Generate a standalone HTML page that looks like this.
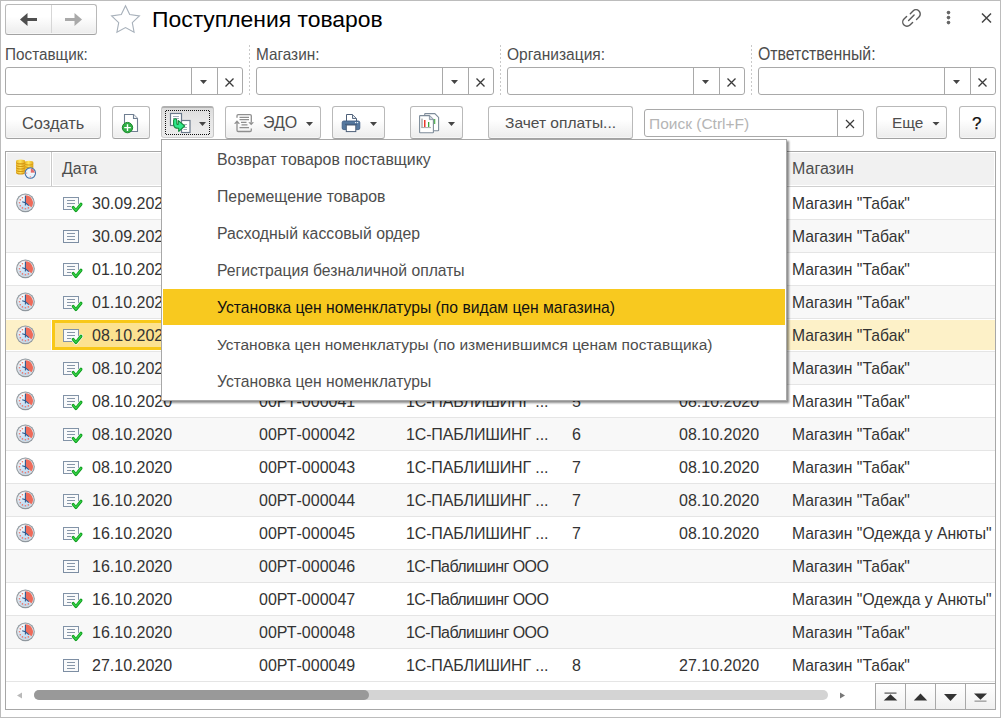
<!DOCTYPE html>
<html><head><meta charset="utf-8">
<style>
*{box-sizing:border-box;margin:0;padding:0}
html,body{width:1001px;height:718px;overflow:hidden;background:#fff;font-family:"Liberation Sans",sans-serif;color:#333}
.a{position:absolute}
#win{position:absolute;left:0;top:0;width:1001px;height:718px;border:1px solid #bcbcbc}
.btn{position:absolute;border:1px solid #b9b9b9;border-bottom:1px solid #a2a2a2;border-radius:3px;background:linear-gradient(#fff 0%,#fff 40%,#ececec 100%);box-shadow:inset 0 -1px 0 #f6f6f6}
.lbl{position:absolute;font-size:15.6px;color:#4d4d4d;white-space:nowrap;line-height:18px;transform:scaleY(1.1);transform-origin:0 14.3px}
.inp{position:absolute;top:67px;width:238px;height:28px;border:1px solid #a9a9a9;border-radius:3px;background:#fff}
.inp .d1,.inp .d2{position:absolute;top:0;bottom:0;width:1px;background:#a9a9a9}
.inp .d1{left:185px}.inp .d2{left:211px}
.tri{position:absolute;width:0;height:0;border-left:4px solid transparent;border-right:4px solid transparent;border-top:4px solid #444}
.sep{position:absolute;top:45px;height:50px;width:1px;background:repeating-linear-gradient(#c9c9c9 0 2px,transparent 2px 4px)}
.row{position:absolute;left:6px;width:989px;height:33px;border-bottom:1px solid #e5e5e5}
.row span{position:absolute;top:0;line-height:33px;font-size:16px;color:#333;white-space:nowrap}
.mi{position:absolute;left:163px;width:622px;height:36px;font-size:15.7px;color:#4d4d4d;white-space:nowrap}
.mi span{position:absolute;left:54px;top:10px;line-height:18px}

.clk{position:absolute;left:10px;top:6px;width:20px;height:20px}
.doc{position:absolute;left:56px;top:9px;width:22px;height:17px}
.selcell{position:absolute;left:46px;top:1px;width:220px;height:30px;background:#fce290;border:3px solid #f8c818;border-right:none}
</style></head><body>
<div id="win"></div>
<svg width="0" height="0" style="position:absolute">
<defs>
<linearGradient id="gface" x1="0" y1="0" x2="0" y2="1"><stop offset="0" stop-color="#ffffff"/><stop offset="1" stop-color="#b7d5ee"/></linearGradient>
<linearGradient id="gring" x1="0" y1="0" x2="1" y2="1"><stop offset="0" stop-color="#e6e8ea"/><stop offset="1" stop-color="#8e969e"/></linearGradient>
<symbol id="clock" viewBox="0.6 0.2 20 20">
<circle cx="10" cy="10" r="9.4" fill="#8f979e"/>
<circle cx="10" cy="10" r="8.3" fill="#dfe3e6"/>
<circle cx="10" cy="10" r="7.5" fill="url(#gface)"/>
<path d="M10 10L10 2.5A7.5 7.5 0 0 1 16.07 14.41Z" fill="#ee6b5a"/>
<g fill="#f07566"><circle cx="12.95" cy="15.11" r=".8"/><circle cx="10.00" cy="15.90" r=".8"/><circle cx="7.05" cy="15.11" r=".8"/><circle cx="4.89" cy="12.95" r=".8"/><circle cx="4.10" cy="10.00" r=".8"/><circle cx="4.89" cy="7.05" r=".8"/><circle cx="7.05" cy="4.89" r=".8"/></g>
<path d="M10 3V12.8M6.8 9L10 10L13.4 12.8" stroke="#2d5b90" stroke-width="1.1" fill="none"/>
</symbol>
<symbol id="doc" viewBox="0 0 22 17">
<rect x="1.5" y="1.5" width="15" height="12" fill="#f9fafb" stroke="#7d8ea3" stroke-width="1"/>
<path d="M5 4.5H13M5 7.5H13M5 10.5H13" stroke="#8796a8" stroke-width="1"/>
</symbol>
<symbol id="docok" viewBox="0 0 22 17">
<rect x="1.5" y="1.5" width="15" height="12" fill="#f9fafb" stroke="#8293a7" stroke-width="1"/>
<path d="M5 4.5H13M5 7.5H13M5 10.5H13" stroke="#8796a8" stroke-width="1"/>
<path d="M11.2 11.4L13.9 14.6L19 8.2" stroke="#fff" stroke-width="4.2" fill="none" stroke-linecap="round" stroke-linejoin="round"/>
<path d="M11.2 11.4L13.9 14.6L19 8.2" stroke="#0e9a1d" stroke-width="3" fill="none" stroke-linecap="round" stroke-linejoin="round"/>
<path d="M11.4 11.5L13.9 14.4L18.9 8.3" stroke="#33cf45" stroke-width="1.4" fill="none" stroke-linecap="round" stroke-linejoin="round"/>
</symbol>
</defs></svg>


<!-- nav buttons -->
<div class="btn" style="left:5px;top:4px;width:92px;height:31px"></div>
<div class="a" style="left:51px;top:5px;width:1px;height:28px;background:#d6d6d6"></div>

<!-- title -->
<div class="a" style="left:152px;top:6px;font-size:22.9px;color:#000;line-height:26px;white-space:nowrap">Поступления товаров</div>

<!-- filter labels -->
<div class="lbl" style="left:5px;top:46px;font-size:15.3px">Поставщик:</div>
<div class="lbl" style="left:256px;top:46px;font-size:15.35px">Магазин:</div>
<div class="lbl" style="left:507px;top:46px;font-size:15.55px">Организация:</div>
<div class="lbl" style="left:758px;top:46px;font-size:15.85px">Ответственный:</div>

<div class="inp" style="left:5px"><div class="d1"></div><div class="d2"></div></div>
<div class="inp" style="left:256px"><div class="d1"></div><div class="d2"></div></div>
<div class="inp" style="left:507px"><div class="d1"></div><div class="d2"></div></div>
<div class="inp" style="left:758px"><div class="d1"></div><div class="d2"></div></div>
<div class="sep" style="left:249px"></div>
<div class="sep" style="left:500px"></div>
<div class="sep" style="left:751px"></div>

<!-- toolbar -->
<div class="btn" style="left:5px;top:106px;width:96px;height:33px"></div>
<div class="a" style="left:22px;top:114px;font-size:16.4px;color:#4d4d4d;line-height:18px">Создать</div>
<div class="btn" style="left:112px;top:106px;width:38px;height:33px"></div>
<div class="a" style="left:161px;top:106px;width:53px;height:32px;border-radius:3px;background:linear-gradient(#dcdcdc,#e6e6e6 40%,#ececec);border:1px solid #c6c6c6;border-top:2px solid #b0b0b0;border-bottom-color:#d0d0d0"></div>
<div class="a" style="left:166px;top:110px;width:43px;height:1px;background:repeating-linear-gradient(90deg,#111 0 1px,transparent 1px 2px)"></div><div class="a" style="left:166px;top:134px;width:43px;height:1px;background:repeating-linear-gradient(90deg,#111 0 1px,transparent 1px 2px)"></div><div class="a" style="left:165px;top:111px;width:1px;height:23px;background:repeating-linear-gradient(#111 0 1px,transparent 1px 2px)"></div><div class="a" style="left:209px;top:111px;width:1px;height:23px;background:repeating-linear-gradient(#111 0 1px,transparent 1px 2px)"></div>
<div class="btn" style="left:225px;top:106px;width:96px;height:33px"></div>
<div class="a" style="left:263px;top:114px;font-size:16px;color:#4d4d4d;line-height:18px">ЭДО</div>
<div class="btn" style="left:332px;top:106px;width:53px;height:33px"></div>
<div class="btn" style="left:410px;top:106px;width:53px;height:33px"></div>
<div class="btn" style="left:488px;top:106px;width:145px;height:33px"></div>
<div class="a" style="left:505px;top:114px;font-size:15.55px;color:#4d4d4d;line-height:18px;white-space:nowrap">Зачет оплаты...</div>
<div class="a" style="left:644px;top:109px;width:220px;height:28px;border:1px solid #a9a9a9;border-radius:3px"></div>
<div class="a" style="left:837px;top:110px;width:1px;height:26px;background:#a9a9a9"></div>
<div class="a" style="left:649px;top:115px;font-size:15.5px;color:#b5b5b5;line-height:18px;white-space:nowrap">Поиск (Ctrl+F)</div>
<div class="btn" style="left:876px;top:106px;width:71px;height:33px"></div>
<div class="a" style="left:892px;top:114px;font-size:15.4px;color:#4d4d4d;line-height:18px">Еще</div>
<div class="btn" style="left:959px;top:106px;width:37px;height:33px"></div>
<div class="a" style="left:972px;top:114px;font-size:17px;color:#111;line-height:20px;-webkit-text-stroke:.25px #111">?</div>


<!-- top icons overlay -->
<svg class="a" style="left:0;top:0" width="1001" height="140" viewBox="0 0 1001 140">
<path d="M20 19.5L27.5 13V18H37V21H27.5V26Z" fill="#4f4f4f"/>
<path d="M82 19.5L74.5 13V18H65V21H74.5V26Z" fill="#a9a9a9"/>
<polygon points="125.50,5.80 129.71,14.61 139.39,15.89 132.30,22.61 134.08,32.21 125.50,27.55 116.92,32.21 118.70,22.61 111.61,15.89 121.29,14.61" fill="none" stroke="#a7b0ba" stroke-width="1.1" stroke-linejoin="miter"/>
<g fill="none" stroke="#5a5a5a" stroke-width="1.4" stroke-linecap="round">
<path d="M910.3 13.7L913 11A4.24 4.24 0 0 1 919 17L916.5 19.5"/>
<path d="M906.6 16.4L904 19A4.24 4.24 0 0 0 910 25L912.6 22.4"/>
<path d="M908.6 20.5L914.1 15"/>
</g>
<g fill="#666"><circle cx="948.5" cy="12.6" r="1.8"/><circle cx="948.5" cy="17.6" r="1.8"/><circle cx="948.5" cy="22.6" r="1.8"/></g>
<path d="M982 13.5L991 22.5M991 13.5L982 22.5" stroke="#444" stroke-width="1.5"/>
<path d="M200 80H207L203.5 84Z" fill="#444"/><path d="M225.5 78.5L233.5 86.5M233.5 78.5L225.5 86.5" stroke="#3a3a3a" stroke-width="1.3"/><path d="M451 80H458L454.5 84Z" fill="#444"/><path d="M476.5 78.5L484.5 86.5M484.5 78.5L476.5 86.5" stroke="#3a3a3a" stroke-width="1.3"/><path d="M702 80H709L705.5 84Z" fill="#444"/><path d="M727.5 78.5L735.5 86.5M735.5 78.5L727.5 86.5" stroke="#3a3a3a" stroke-width="1.3"/><path d="M953 80H960L956.5 84Z" fill="#444"/><path d="M978.5 78.5L986.5 86.5M986.5 78.5L978.5 86.5" stroke="#3a3a3a" stroke-width="1.3"/>
<path d="M846 120L854 128M854 120L846 128" stroke="#3a3a3a" stroke-width="1.2"/>
<!-- add doc -->
<path d="M124.5 114.5H133.5L137.5 118.5V131.5H124.5Z" fill="#fff" stroke="#6f7e91" stroke-width="1.1"/>
<path d="M133.5 114.5V118.5H137.5" fill="#f0f2f4" stroke="#6f7e91" stroke-width="1.1"/>
<circle cx="127.5" cy="127.6" r="5.2" fill="#2fae45" stroke="#1b8a2c" stroke-width="1"/>
<path d="M124.2 127.6H130.8M127.5 124.3V130.9" stroke="#fff" stroke-width="1.4"/>
<!-- pressed button -->
<rect x="170.5" y="113.5" width="11" height="12" fill="#fff" stroke="#6b7a8c" stroke-width="1.2"/>
<path d="M173 116.5H179M173 118.5H179" stroke="#8a98a8" stroke-width=".8"/>
<rect x="181.5" y="120.5" width="8.5" height="12" fill="#fff" stroke="#6b7a8c" stroke-width="1.2"/>
<path d="M183.5 124.5H187M183.5 127.5H187M183.5 129.5H187" stroke="#8a98a8" stroke-width=".8"/>
<path d="M173.6 120.4A1.6 1.6 0 0 1 176.8 120.4L176.8 123.6Q176.9 124.6 178.2 124.4L178.4 120.6L184.7 126L178.8 131.4L178.7 128.3Q174.2 128.6 173.6 124.6Z" fill="#2fe88c" stroke="#138a3a" stroke-width="1.1" stroke-linejoin="round"/>
<path d="M199 122H206L202.5 126Z" fill="#444"/>
<!-- EDO icon -->
<g fill="none" stroke="#8f8f8f" stroke-width="1.3">
<path d="M237 117.8V115.8Q237 114.6 238.2 114.6H250Q251.3 114.6 251.3 115.8V122"/>
<path d="M237 124V130.3Q237 131.5 238.2 131.5H250Q251.3 131.5 251.3 130.3V128.5"/>
<path d="M239.5 117.3H249M239.5 119.7H249M241 122.4H246.5M241.5 124.9H247.5M239.5 127.6H249"/>
</g>
<path d="M234 123.8L237 120.3L240 123.8Z" fill="#8f8f8f"/>
<path d="M248.3 122.2H254L251.2 125.2Z" fill="#8f8f8f"/>
<path d="M306 122H313L309.5 126Z" fill="#444"/>
<!-- printer -->
<path d="M346.5 121V114.5H352.5L356.5 118.5V121" fill="#fff" stroke="#4d5f78" stroke-width="1" stroke-linejoin="round"/>
<path d="M352.5 114.8V118.5H356.2" fill="#dfe5ec" stroke="#4d5f78" stroke-width=".9" stroke-linejoin="round"/>
<rect x="342.2" y="121" width="17.6" height="8.6" rx="1.6" fill="#56799f" stroke="#3f5f86" stroke-width=".9"/>
<path d="M345 124.3H357" stroke="#3d5a80" stroke-width="1"/>
<rect x="346.3" y="125" width="9.5" height="6.6" fill="#fff" stroke="#4d5f78" stroke-width="1"/>
<circle cx="355.6" cy="122.6" r=".7" fill="#fff"/><circle cx="357.6" cy="122.6" r=".7" fill="#fff"/>
<path d="M370 122H377L373.5 126Z" fill="#444"/>
<!-- report -->
<path d="M424.7 115.5V114.2Q424.7 113.6 425.3 113.6H434.8L438.6 117.4V130.2Q438.6 130.8 438 130.8H433.8" fill="#fff" stroke="#7d8b99" stroke-width="1.1"/>
<path d="M419.6 116.2Q419.6 115.6 420.2 115.6H429.4L433.4 119.6V132.2Q433.4 132.8 432.8 132.8H420.2Q419.6 132.8 419.6 132.2Z" fill="#fff" stroke="#7d8b99" stroke-width="1.1"/>
<path d="M429.4 115.6V119.6H433.4" fill="#c9d0d8" stroke="#7d8b99" stroke-width=".8"/>
<rect x="421.3" y="118.6" width="1.4" height="9" fill="#a9a9a9"/>
<rect x="424" y="120" width="1.5" height="7" fill="#e8392a"/>
<rect x="428" y="122" width="1.3" height="5" fill="#3aa53a"/>
<rect x="433.9" y="119" width="1.4" height="5" fill="#5cb85c"/>
<path d="M421.3 127.6H431" stroke="#a0a0a0" stroke-width=".9"/>
<path d="M448 122H455L451.5 126Z" fill="#444"/>
<path d="M932.5 122H939.5L936 125.5Z" fill="#444"/>
</svg>

<!-- table -->
<div class="a" style="left:5px;top:151px;width:991px;height:559px;border:1px solid #a7a7a7"></div>
<div class="a" style="left:6px;top:152px;width:989px;height:35px;background:#fff;border-bottom:1px solid #d0d0d0"></div>
<div class="a" style="left:6px;top:152px;width:45px;height:34px;background:#f1f1f1;border:1px solid #fff"></div>
<div class="a" style="left:52px;top:152px;width:943px;height:34px;background:#f1f1f1;border:1px solid #fff"></div>
<div class="a" style="left:51px;top:152px;width:1px;height:34px;background:#cacaca"></div>
<svg class="a" style="left:8px;top:152px" width="40" height="34" viewBox="8 152 40 34">
<defs><linearGradient id="gc" x1="0" x2="1"><stop offset="0" stop-color="#e8b626"/><stop offset=".45" stop-color="#ffe45c"/><stop offset="1" stop-color="#e0a418"/></linearGradient></defs>
<ellipse cx="29" cy="168.5" rx="4.4" ry="2" fill="#d9a016"/><ellipse cx="29" cy="167.5" rx="4.4" ry="1.9" fill="url(#gc)"/><ellipse cx="29" cy="166" rx="4.4" ry="2" fill="#d9a016"/><ellipse cx="29" cy="165" rx="4.4" ry="1.9" fill="url(#gc)"/><ellipse cx="29" cy="163.6" rx="4.4" ry="2" fill="#d9a016"/><ellipse cx="29" cy="162.6" rx="4.4" ry="1.9" fill="url(#gc)"/><ellipse cx="20.6" cy="172.5" rx="4.6" ry="2" fill="#d39512"/><ellipse cx="20.6" cy="171.5" rx="4.6" ry="1.9" fill="url(#gc)"/><ellipse cx="20.6" cy="170" rx="4.6" ry="2" fill="#d39512"/><ellipse cx="20.6" cy="169" rx="4.6" ry="1.9" fill="url(#gc)"/><ellipse cx="20.6" cy="167.5" rx="4.6" ry="2" fill="#d39512"/><ellipse cx="20.6" cy="166.5" rx="4.6" ry="1.9" fill="url(#gc)"/><ellipse cx="20.6" cy="165" rx="4.6" ry="2" fill="#d39512"/><ellipse cx="20.6" cy="164" rx="4.6" ry="1.9" fill="url(#gc)"/><ellipse cx="20.6" cy="162.4" rx="4.6" ry="2" fill="#d39512"/><ellipse cx="20.6" cy="161.4" rx="4.6" ry="1.9" fill="url(#gc)"/>
<circle cx="30.3" cy="173.1" r="5.6" fill="#fff"/>
<circle cx="30.3" cy="173.1" r="5.2" fill="#eaf3fb" stroke="#3f6fa6" stroke-width="1.1"/>
<path d="M30.3 173.1V168.6A4.5 4.5 0 0 1 34.8 173.1Z" fill="#e36c6c"/>
<path d="M30.3 168.6V173.1H34.8M25.8 173.1H27M30.3 177.6V176.4" stroke="#fff" stroke-width=".8" fill="none"/>
<path d="M25.8 173.1H27.2M30.3 177.6V176.2" stroke="#e36c6c" stroke-width=".9" fill="none"/>
</svg>
<div class="a" style="left:62px;top:152px;line-height:33px;font-size:16px;color:#4d4d4d">Дата</div>
<div class="a" style="left:792px;top:152px;line-height:33px;font-size:16px;color:#4d4d4d">Магазин</div>

<div id="rows">
<div class="row" style="top:187px;background:#fff"><svg class="clk"><use href="#clock"/></svg><svg class="doc"><use href="#docok"/></svg><span style="left:86px">30.09.2020</span><span style="left:253px">00РТ-000036</span><span style="left:400px;letter-spacing:-0.15px">1С-ПАБЛИШИНГ ...</span><span style="left:566px">1</span><span style="left:673px">30.09.2020</span><span style="left:786px;font-size:15.7px">Магазин "Табак"</span></div>
<div class="row" style="top:220px;background:#f8f8f8"><svg class="doc"><use href="#doc"/></svg><span style="left:86px">30.09.2020</span><span style="left:253px">00РТ-000037</span><span style="left:400px;letter-spacing:-0.55px">1С-Паблишинг ООО</span><span style="left:786px;font-size:15.7px">Магазин "Табак"</span></div>
<div class="row" style="top:253px;background:#fff"><svg class="clk"><use href="#clock"/></svg><svg class="doc"><use href="#docok"/></svg><span style="left:86px">01.10.2020</span><span style="left:253px">00РТ-000038</span><span style="left:400px;letter-spacing:-0.15px">1С-ПАБЛИШИНГ ...</span><span style="left:566px">2</span><span style="left:673px">01.10.2020</span><span style="left:786px;font-size:15.7px">Магазин "Табак"</span></div>
<div class="row" style="top:286px;background:#f8f8f8"><svg class="clk"><use href="#clock"/></svg><svg class="doc"><use href="#docok"/></svg><span style="left:86px">01.10.2020</span><span style="left:253px">00РТ-000039</span><span style="left:400px;letter-spacing:-0.15px">1С-ПАБЛИШИНГ ...</span><span style="left:566px">3</span><span style="left:673px">01.10.2020</span><span style="left:786px;font-size:15.7px">Магазин "Табак"</span></div>
<div class="row" style="top:319px;background:#fff"><div class="a" style="left:0;top:1px;width:45px;height:30px;background:#fdf1c8"></div><div class="a" style="left:46px;top:1px;width:943px;height:30px;background:#fdf1c8"></div><div class="selcell"></div><svg class="clk"><use href="#clock"/></svg><svg class="doc"><use href="#docok"/></svg><span style="left:86px">08.10.2020</span><span style="left:253px">00РТ-000040</span><span style="left:400px;letter-spacing:-0.15px">1С-ПАБЛИШИНГ ...</span><span style="left:566px">4</span><span style="left:673px">08.10.2020</span><span style="left:786px;font-size:15.7px">Магазин "Табак"</span></div>
<div class="row" style="top:352px;background:#f8f8f8"><svg class="clk"><use href="#clock"/></svg><svg class="doc"><use href="#docok"/></svg><span style="left:86px">08.10.2020</span><span style="left:253px">00РТ-000041</span><span style="left:400px;letter-spacing:-0.15px">1С-ПАБЛИШИНГ ...</span><span style="left:566px">5</span><span style="left:673px">08.10.2020</span><span style="left:786px;font-size:15.7px">Магазин "Табак"</span></div>
<div class="row" style="top:385px;background:#fff"><svg class="clk"><use href="#clock"/></svg><svg class="doc"><use href="#docok"/></svg><span style="left:86px">08.10.2020</span><span style="left:253px">00РТ-000041</span><span style="left:400px;letter-spacing:-0.15px">1С-ПАБЛИШИНГ ...</span><span style="left:566px">5</span><span style="left:673px">08.10.2020</span><span style="left:786px;font-size:15.7px">Магазин "Табак"</span></div>
<div class="row" style="top:418px;background:#f8f8f8"><svg class="clk"><use href="#clock"/></svg><svg class="doc"><use href="#docok"/></svg><span style="left:86px">08.10.2020</span><span style="left:253px">00РТ-000042</span><span style="left:400px;letter-spacing:-0.15px">1С-ПАБЛИШИНГ ...</span><span style="left:566px">6</span><span style="left:673px">08.10.2020</span><span style="left:786px;font-size:15.7px">Магазин "Табак"</span></div>
<div class="row" style="top:451px;background:#fff"><svg class="clk"><use href="#clock"/></svg><svg class="doc"><use href="#docok"/></svg><span style="left:86px">08.10.2020</span><span style="left:253px">00РТ-000043</span><span style="left:400px;letter-spacing:-0.15px">1С-ПАБЛИШИНГ ...</span><span style="left:566px">7</span><span style="left:673px">08.10.2020</span><span style="left:786px;font-size:15.7px">Магазин "Табак"</span></div>
<div class="row" style="top:484px;background:#f8f8f8"><svg class="clk"><use href="#clock"/></svg><svg class="doc"><use href="#docok"/></svg><span style="left:86px">16.10.2020</span><span style="left:253px">00РТ-000044</span><span style="left:400px;letter-spacing:-0.15px">1С-ПАБЛИШИНГ ...</span><span style="left:566px">7</span><span style="left:673px">08.10.2020</span><span style="left:786px;font-size:15.7px">Магазин "Табак"</span></div>
<div class="row" style="top:517px;background:#fff"><svg class="clk"><use href="#clock"/></svg><svg class="doc"><use href="#docok"/></svg><span style="left:86px">16.10.2020</span><span style="left:253px">00РТ-000045</span><span style="left:400px;letter-spacing:-0.15px">1С-ПАБЛИШИНГ ...</span><span style="left:566px">7</span><span style="left:673px">08.10.2020</span><span style="left:786px;font-size:15.7px">Магазин "Одежда у Анюты"</span></div>
<div class="row" style="top:550px;background:#f8f8f8"><svg class="doc"><use href="#doc"/></svg><span style="left:86px">16.10.2020</span><span style="left:253px">00РТ-000046</span><span style="left:400px;letter-spacing:-0.55px">1С-Паблишинг ООО</span><span style="left:786px;font-size:15.7px">Магазин "Табак"</span></div>
<div class="row" style="top:583px;background:#fff"><svg class="clk"><use href="#clock"/></svg><svg class="doc"><use href="#docok"/></svg><span style="left:86px">16.10.2020</span><span style="left:253px">00РТ-000047</span><span style="left:400px;letter-spacing:-0.55px">1С-Паблишинг ООО</span><span style="left:786px;font-size:15.7px">Магазин "Одежда у Анюты"</span></div>
<div class="row" style="top:616px;background:#f8f8f8"><svg class="clk"><use href="#clock"/></svg><svg class="doc"><use href="#docok"/></svg><span style="left:86px">16.10.2020</span><span style="left:253px">00РТ-000048</span><span style="left:400px;letter-spacing:-0.55px">1С-Паблишинг ООО</span><span style="left:786px;font-size:15.7px">Магазин "Табак"</span></div>
<div class="row" style="top:649px;background:#fff"><svg class="doc"><use href="#doc"/></svg><span style="left:86px">27.10.2020</span><span style="left:253px">00РТ-000049</span><span style="left:400px;letter-spacing:-0.15px">1С-ПАБЛИШИНГ ...</span><span style="left:566px">8</span><span style="left:673px">27.10.2020</span><span style="left:786px;font-size:15.7px">Магазин "Табак"</span></div>
</div>



<!-- scrollbar + nav -->
<svg class="a" style="left:0;top:676px" width="1001" height="42" viewBox="0 676 1001 42">
<path d="M17 695.5L22 692.5V698.5Z" fill="#b9b9b9"/>
<rect x="34" y="690" width="794" height="10" rx="5" fill="#d4d4d4"/>
<rect x="34" y="690" width="335" height="10" rx="5" fill="#999"/>
<path d="M845 695.5L840 692.5V698.5Z" fill="#777"/>
</svg>
<div class="a" style="left:875px;top:683px;width:121px;height:27px;border:1px solid #a8a8a8;background:linear-gradient(#fff,#f0f0f0)"></div>
<div class="a" style="left:905px;top:683px;width:1px;height:27px;background:#a8a8a8"></div>
<div class="a" style="left:935px;top:683px;width:1px;height:27px;background:#a8a8a8"></div>
<div class="a" style="left:965px;top:683px;width:1px;height:27px;background:#a8a8a8"></div>
<svg class="a" style="left:870px;top:676px" width="131" height="42" viewBox="870 676 131 42">
<rect x="884.5" y="692.5" width="12" height="1.2" fill="#555"/>
<path d="M883.7 700.5L890.5 694.2L897.3 700.5Z" fill="#333"/>
<path d="M913.8 700.5L920.5 693.6L927.2 700.5Z" fill="#333"/>
<path d="M944 694H957L950.5 701Z" fill="#333"/>
<path d="M974 693.6H987L980.5 699.8Z" fill="#333"/>
<rect x="974.5" y="700.5" width="12" height="1.3" fill="#9a9a9a"/>
</svg>

<!-- popup -->
<div class="a" style="left:161px;top:139px;width:626px;height:262px;background:#fff;border:1px solid #a8a8a8;box-shadow:2px 2px 2px rgba(0,0,0,.45)"></div>
<div class="mi" style="top:141px"><span style="font-size:15.85px">Возврат товаров поставщику</span></div>
<div class="mi" style="top:178px"><span style="font-size:15.8px">Перемещение товаров</span></div>
<div class="mi" style="top:215px"><span style="font-size:15.8px">Расходный кассовый ордер</span></div>
<div class="mi" style="top:252px"><span>Регистрация безналичной оплаты</span></div>
<div class="mi" style="top:289px;background:#f8c91f;color:#111"><span>Установка цен номенклатуры (по видам цен магазина)</span></div>
<div class="mi" style="top:326px"><span style="font-size:15.5px">Установка цен номенклатуры (по изменившимся ценам поставщика)</span></div>
<div class="mi" style="top:363px"><span>Установка цен номенклатуры</span></div>
</body></html>
